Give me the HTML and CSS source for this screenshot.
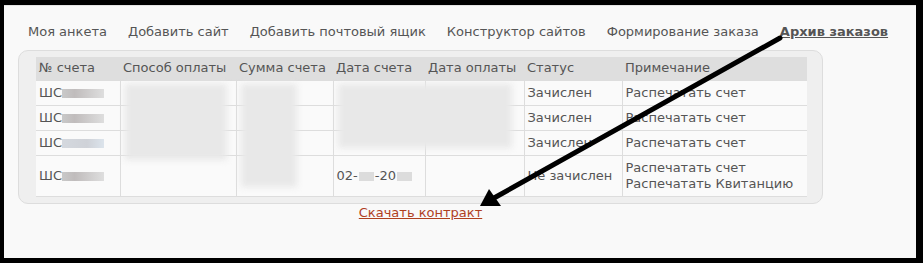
FILE: index.html
```html
<!DOCTYPE html>
<html lang="ru">
  <head>
    <meta charset="utf-8">
    <title>Архив заказов</title>
    <link rel="stylesheet" href="styles.css">
  </head>
  <body>
    <div class="frame">
      <!-- top menu -->
      <ul class="menu">
        <li><a href="#">Моя анкета</a></li>
        <li><a href="#">Добавить сайт</a></li>
        <li><a href="#">Добавить почтовый ящик</a></li>
        <li><a href="#">Конструктор сайтов</a></li>
        <li><a href="#">Формирование заказа</a></li>
        <li><a href="#" class="current">Архив заказов</a></li>
      </ul>

      <div class="archive">
        <div class="panel">
          <table class="orders">
            <tr class="head">
              <th class="c1">№ счета</th>
              <th class="c2">Способ оплаты</th>
              <th class="c3">Сумма счета</th>
              <th class="c4">Дата счета</th>
              <th class="c5">Дата оплаты</th>
              <th class="c6">Статус</th>
              <th class="c7">Примечание</th>
            </tr>
            <tr>
              <td>ШС<span class="hid"></span></td>
              <td></td><td></td><td></td><td></td>
              <td>Зачислен</td>
              <td><a href="#">Распечатать счет</a></td>
            </tr>
            <tr>
              <td>ШС<span class="hid"></span></td>
              <td></td><td></td><td></td><td></td>
              <td>Зачислен</td>
              <td><a href="#">Распечатать счет</a></td>
            </tr>
            <tr>
              <td>ШС<span class="hid hid-blue"></span></td>
              <td></td><td></td><td></td><td></td>
              <td>Зачислен</td>
              <td><a href="#">Распечатать счет</a></td>
            </tr>
            <tr class="tall">
              <td>ШС<span class="hid"></span></td>
              <td></td><td></td>
              <td>02-<span class="hid hid-s"></span>-20<span class="hid hid-s"></span></td>
              <td></td>
              <td>Не зачислен</td>
              <td><a href="#">Распечатать счет</a><br><a href="#">Распечатать Квитанцию</a></td>
            </tr>
          </table>
          <!-- blurred private data -->
          <div class="blur blur-pay"></div>
          <div class="blur blur-sum"></div>
          <div class="blur blur-dates"></div>
        </div>
        <p class="download"><a href="#">Скачать контракт</a></p>
      </div>

      <svg class="arrow" width="923" height="263" viewBox="0 0 923 263">
        <line x1="780" y1="38" x2="494" y2="198" stroke="#000" stroke-width="5" stroke-linecap="round"/>
        <polygon points="480,206 489,189 501,206" fill="#000"/>
      </svg>
    </div>
  </body>
</html>
```

FILE: styles.css
```css
body {
  margin: 0;
  background: #000;
}

.frame {
  position: relative;
  margin: 5px 7px 5px 4px;
  height: 253px;
  background: #f9f9f9;
  border-top: 1px solid #e4e4e4;
  box-sizing: border-box;
  font-family: "DejaVu Sans", Verdana, sans-serif;
  font-size: 13px;
  color: #555;
}

.menu {
  display: flex;
  gap: 21px;
  margin: 0;
  padding: 18px 0 0 24px;
  list-style: none;
  height: 26px;
}

.menu a {
  color: #555;
  text-decoration: none;
}

.menu a.current {
  font-weight: bold;
  text-decoration: underline;
}

.archive {
  width: 805px;
  margin-left: 14px;
}

.panel {
  position: relative;
  background: #efefef;
  border: 1px solid #ddd;
  border-radius: 10px;
  padding: 6px 15px 6px 17px;
}

.orders {
  border-collapse: collapse;
  width: 771px;
  table-layout: fixed;
  background: #fafafa;
}

.orders th,
.orders td {
  box-sizing: border-box;
  border-left: 1px solid #ddd;
  border-bottom: 1px solid #ddd;
  padding: 0 0 0 3px;
  text-align: left;
  font-weight: normal;
  white-space: nowrap;
  line-height: 16px;
}

.orders th:first-child,
.orders td:first-child {
  border-left: none;
}

.orders .head th {
  background: #dedede;
  height: 23px;
  border-left: none;
}

.orders td {
  height: 25px;
}

.orders .tall td {
  height: 41px;
}

.c1 { width: 84px; }
.c2 { width: 116px; }
.c3 { width: 97px; }
.c4 { width: 92px; }
.c5 { width: 99px; }
.c6 { width: 98px; }

.orders a {
  color: #555;
  text-decoration: none;
}

.hid {
  display: inline-block;
  width: 42px;
  height: 9px;
  vertical-align: -1px;
  background: linear-gradient(to right, #c9c9c9, #c0bcbc 30%, #dedede);
  filter: blur(0.6px);
}

.hid-blue {
  background: linear-gradient(to right, #d4d8de, #cfd2d8 60%, #dce4ec);
}

.hid-s {
  width: 15px;
  margin: 0 1px;
  background: #dcdcdc;
}

.blur {
  position: absolute;
  background: #e8e8e8;
  filter: blur(3px);
}

.blur-pay {
  left: 106px;
  top: 33px;
  width: 102px;
  height: 76px;
}

.blur-sum {
  left: 222px;
  top: 33px;
  width: 56px;
  height: 103px;
}

.blur-dates {
  left: 319px;
  top: 33px;
  width: 174px;
  height: 64px;
}

.download {
  margin: 1px 0 0;
  text-align: center;
}

.download a {
  color: #b0401f;
  text-decoration: underline;
}

.arrow {
  position: absolute;
  left: -4px;
  top: -6px;
  pointer-events: none;
}
```
